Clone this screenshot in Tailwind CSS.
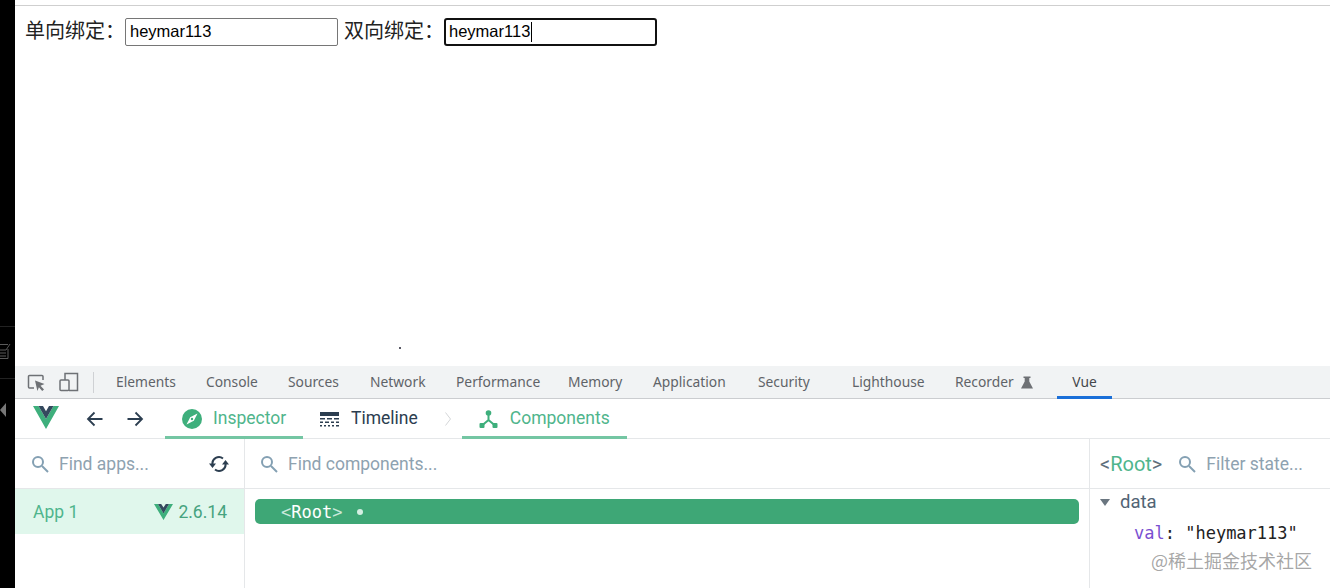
<!DOCTYPE html>
<html lang="zh">
<head>
<meta charset="utf-8">
<script src="https://cdn.jsdelivr.net/npm/@tailwindcss/browser@4"></script>
</head>
<body class="bg-white overflow-hidden">
<div class="relative flex w-[1330px] h-[588px] overflow-hidden font-['Roboto',sans-serif]">
  <!-- black strip at left -->
  <aside class="relative w-[15px] shrink-0 bg-black">
    <svg class="absolute left-0 top-[342px] text-[#5a5a5a]" width="15" height="18" viewBox="0 0 15 18" fill="none" stroke="currentColor"><path d="M0 2.500h8M8 7v9.500H0M0 8h6M0 11h6M0 14h6M6 8l4-6"/></svg>
    <div class="absolute left-0 top-[326px] w-[15px] h-px bg-[#222]"></div>
    <div class="absolute left-0 top-[378px] w-[15px] h-px bg-[#222]"></div>
    <div class="absolute left-0 top-[403px] w-0 h-0 border-y-[7px] border-y-transparent border-r-[6px] border-r-[#777]"></div>
  </aside>

  <main class="flex-1 min-w-0 flex flex-col">
    <!-- page -->
    <section class="relative h-[366px] shrink-0 pt-[5px]">
      <div class="h-px bg-[#cfcfcf]"></div>
      <div class="flex items-center h-[28px] mt-[12px] pl-[10px] font-['Noto_Sans_CJK_SC',sans-serif] text-[20px] text-[#222]">
        <span class="w-[100px] -mt-[5px]">单向绑定：</span>
        <input value="heymar113" class="w-[213px] h-[28px] px-1 pb-[2px] rounded-[2px] border border-[#767676] bg-white text-[16.500px] text-black font-['Liberation_Sans',sans-serif]">
        <span class="w-[100px] ml-[6px] -mt-[5px]">双向绑定：</span>
        <div class="relative w-[213px] h-[28px] pl-[3px] rounded-[3px] border-2 border-[#111] bg-white text-[16.500px] leading-[22px] text-black font-['Liberation_Sans',sans-serif]">heymar113<span class="absolute left-[85px] top-[2px] w-px h-[20px] bg-black"></span></div>
      </div>
      <div class="absolute left-[384px] top-[347px] w-[2px] h-[2px] rounded-full bg-[#223]"></div>
    </section>

    <!-- devtools tabs -->
    <nav class="flex items-center h-[33px] shrink-0 bg-[#f1f3f4] border-b border-[#cbcdd0] text-[13.800px] text-[#5f6368] font-['Noto_Sans',sans-serif]">
      <div class="flex items-center w-[78px] h-full shrink-0 pl-[12px] gap-[13px]">
        <svg width="19" height="19" viewBox="0 0 19 19" fill="none"><path d="M7 15H2.500A1 1 0 0 1 1.500 14V3.500A1 1 0 0 1 2.500 2.500H15A1 1 0 0 1 16 3.500V7" stroke="#6e7175" stroke-width="1.500"/><path d="M8 7.500l9.500 3.500-4 1.800 3.500 3.700-1.800 1.500-3.300-3.700-1.500 3.700z" fill="#6e7175"/></svg>
        <svg width="20" height="20" viewBox="0 0 20 20" fill="none" stroke="#6e7175" stroke-width="1.500"><path d="M6 8V1.500h12.500v17H10"/><rect x="1" y="8" width="9" height="10.500" rx="1"/></svg>
      </div>
      <div class="w-px h-[21px] bg-[#cfd1d4] shrink-0"></div>
      <span class="w-[90px] ml-[22px] shrink-0">Elements</span>
      <span class="w-[82px] shrink-0">Console</span>
      <span class="w-[82px] shrink-0">Sources</span>
      <span class="w-[86px] shrink-0">Network</span>
      <span class="w-[112px] shrink-0">Performance</span>
      <span class="w-[85px] shrink-0">Memory</span>
      <span class="w-[105px] shrink-0">Application</span>
      <span class="w-[94px] shrink-0">Security</span>
      <span class="w-[103px] shrink-0">Lighthouse</span>
      <span class="flex items-center w-[102px] shrink-0 gap-[7px]">Recorder
        <svg width="12" height="13" viewBox="0 0 12 13" fill="#6e7175"><path d="M2.500 0.500h7v1.500H8.300v3.500L12 12.500H0L3.700 5.500V2H2.500z"/></svg>
      </span>
      <span class="relative flex items-center justify-center w-[55px] h-full shrink-0 text-[#44474b]">Vue<span class="absolute left-0 right-0 -bottom-px h-[3px] bg-[#1a6fd8]"></span></span>
    </nav>

    <!-- vue toolbar -->
    <header class="flex items-center h-[40px] shrink-0 border-b border-[#e5e7e9] text-[17.500px]">
      <svg class="ml-[18px] shrink-0 -mt-[2px]" width="26" height="23" viewBox="0 0 26 23"><path d="M0 0h5.500L13 13 20.500 0H26L13 23z" fill="#3eaf7c"/><path d="M5.500 0H10l3 5.200L16 0h4.500L13 13z" fill="#34495e"/></svg>
      <svg class="ml-[27px] shrink-0" width="18" height="16" viewBox="0 0 18 16" fill="none" stroke="#2c3e50" stroke-width="1.800"><path d="M16.500 8H2M8.500 1.500L2 8l6.500 6.500"/></svg>
      <svg class="ml-[22px] shrink-0" width="18" height="16" viewBox="0 0 18 16" fill="none" stroke="#2c3e50" stroke-width="1.800"><path d="M1.500 8H16M9.500 1.500L16 8l-6.500 6.500"/></svg>
      <div class="relative flex items-center ml-[21px] w-[138px] h-full shrink-0 pl-[17px] gap-[11px] text-[#4fb58c]">
        <svg width="20" height="20" viewBox="0 0 20 20"><circle cx="10" cy="10" r="10" fill="#3eaf7c"/><path d="M15.500 4.500L11.800 11.800 4.500 15.500 8.200 8.200z" fill="#fff"/><circle cx="10" cy="10" r="1.200" fill="#3eaf7c"/></svg>
        Inspector
        <span class="absolute left-0 right-0 -bottom-px h-[3px] bg-[#74c6a3]"></span>
      </div>
      <div class="flex items-center ml-[17px] h-full shrink-0 gap-[12px] text-[#2c3e50]">
        <svg width="19" height="16" viewBox="0 0 19 16" fill="#2c3e50"><path d="M0 1h19v4H0zM0 7h5v1.500H0zM7 7h5v1.500H7zM14 7h5v1.500h-5zM0 10.500h3V12H0zM5 10.500h4V12H5zM11 10.500h3V12h-3zM16 10.500h3V12h-3zM0 14h2v1.500H0zM4 14h2v1.500H4zM8 14h2v1.500H8zM12 14h2v1.500h-2zM16 14h3v1.500h-3z"/></svg>
        Timeline
      </div>
      <svg class="ml-[27px] shrink-0" width="6" height="14" viewBox="0 0 6 14" fill="none" stroke="#d4d6d8"><path d="M0.500 0.500L5.500 7l-5 6.500"/></svg>
      <div class="relative flex items-center ml-[11px] w-[165px] h-full shrink-0 pl-[17px] gap-[12px] text-[#4fb58c]">
        <svg width="19" height="18" viewBox="0 0 19 18" fill="#3eaf7c"><circle cx="9.500" cy="3" r="2.800"/><rect x="0.500" y="13" width="5" height="5" rx="1"/><rect x="13.500" y="13" width="5" height="5" rx="1"/><path d="M9.500 4v6M9.500 10L3 15.500M9.500 10l6.500 5.500" stroke="#3eaf7c" stroke-width="2" fill="none"/></svg>
        Components
        <span class="absolute left-0 right-0 -bottom-px h-[3px] bg-[#74c6a3]"></span>
      </div>
    </header>

    <!-- panes -->
    <div class="flex flex-1 min-h-0">
      <div class="w-[230px] shrink-0 border-r border-[#e5e7e9] flex flex-col">
        <div class="flex items-center h-[50px] shrink-0 border-b border-[#e5e7e9] pl-[16px] pr-[15px] text-[17.500px] text-[#8ea2b0]">
          <svg width="18" height="18" viewBox="0 0 18 18" fill="none" stroke="#84a0b3" stroke-width="2"><circle cx="7" cy="7" r="5"/><path d="M11 11l6 6"/></svg>
          <span class="ml-[10px] pt-[2px]">Find apps...</span>
          <svg class="ml-auto" width="20" height="18" viewBox="0 0 20 18" fill="none" stroke="#2c3e50" stroke-width="2"><path d="M3.500 9.500A6.500 6.500 0 0 1 14 3.500M16.500 8.500A6.500 6.500 0 0 1 6 14.500"/><path d="M0 8.500h7L3.500 13zM13 9.500h7L16.500 5z" fill="#2c3e50" stroke="none"/></svg>
        </div>
        <div class="flex items-center justify-between h-[45px] shrink-0 bg-[#e0f7ec] pl-[18px] pr-[17px] text-[17.500px] text-[#4fb58c]">
          <span class="pt-[2px]">App 1</span>
          <span class="flex items-center gap-[5px] text-[#46a37f]">
            <svg width="19" height="16" viewBox="0 0 19 16"><path d="M0 0h4L9.500 9.500 15 0h4L9.500 16z" fill="#3eaf7c"/><path d="M4 0h3.200l2.300 3.600L11.800 0H15L9.500 9.500z" fill="#34495e"/></svg>
            <span class="pt-[2px]">2.6.14</span>
          </span>
        </div>
      </div>
      <div class="flex-1 min-w-0 border-r border-[#e5e7e9] flex flex-col">
        <div class="flex items-center h-[50px] shrink-0 border-b border-[#e5e7e9] pl-[15px] text-[17.500px] text-[#8ea2b0]">
          <svg width="18" height="18" viewBox="0 0 18 18" fill="none" stroke="#84a0b3" stroke-width="2"><circle cx="7" cy="7" r="5"/><path d="M11 11l6 6"/></svg>
          <span class="ml-[10px] pt-[2px]">Find components...</span>
        </div>
        <div class="px-[10px] pt-[10px]">
          <div class="flex items-center h-[25px] rounded-[5px] bg-[#3ea776] pl-[26px] text-[17px] text-white font-['DejaVu_Sans_Mono',monospace]">
            <span class="pt-[2px] text-[#c9e8da]">&lt;</span><span class="pt-[2px]">Root</span><span class="pt-[2px] text-[#c9e8da]">&gt;</span>
            <span class="ml-[15px] w-[6px] h-[6px] rounded-full bg-[#d5efe3]"></span>
          </div>
        </div>
      </div>
      <div class="w-[240px] shrink-0 flex flex-col">
        <div class="flex items-center h-[50px] shrink-0 border-b border-[#e5e7e9] pl-[10px] text-[17.500px] text-[#8ea2b0]">
          <span class="text-[20px] text-[#5f6f7c]">&lt;<span class="text-[#4fb58c]">Root</span>&gt;</span>
          <svg class="ml-[16px]" width="18" height="18" viewBox="0 0 18 18" fill="none" stroke="#84a0b3" stroke-width="2"><circle cx="7" cy="7" r="5"/><path d="M11 11l6 6"/></svg>
          <span class="ml-[10px] pt-[2px]">Filter state...</span>
        </div>
        <div class="flex items-center h-[26px] pl-[10px] text-[18.500px] text-[#516474]">
          <span class="w-0 h-0 border-x-[5px] border-x-transparent border-t-[7px] border-t-[#6a7680]"></span>
          <span class="ml-[10px] pt-[2px]">data</span>
        </div>
        <div class="pl-[44px] mt-[7px] text-[17px] leading-[22px] text-[#222] font-['DejaVu_Sans_Mono',monospace] whitespace-nowrap"><span class="text-[#7a4fd1]">val</span>: "heymar113"</div>
      </div>
    </div>
  </main>
  <div class="absolute left-[1151px] top-[549px] text-[18px] leading-[22px] text-[#8f8f8f]/80 font-['Noto_Sans_CJK_SC',sans-serif] whitespace-nowrap">@稀土掘金技术社区</div>
</div>
</body>
</html>
